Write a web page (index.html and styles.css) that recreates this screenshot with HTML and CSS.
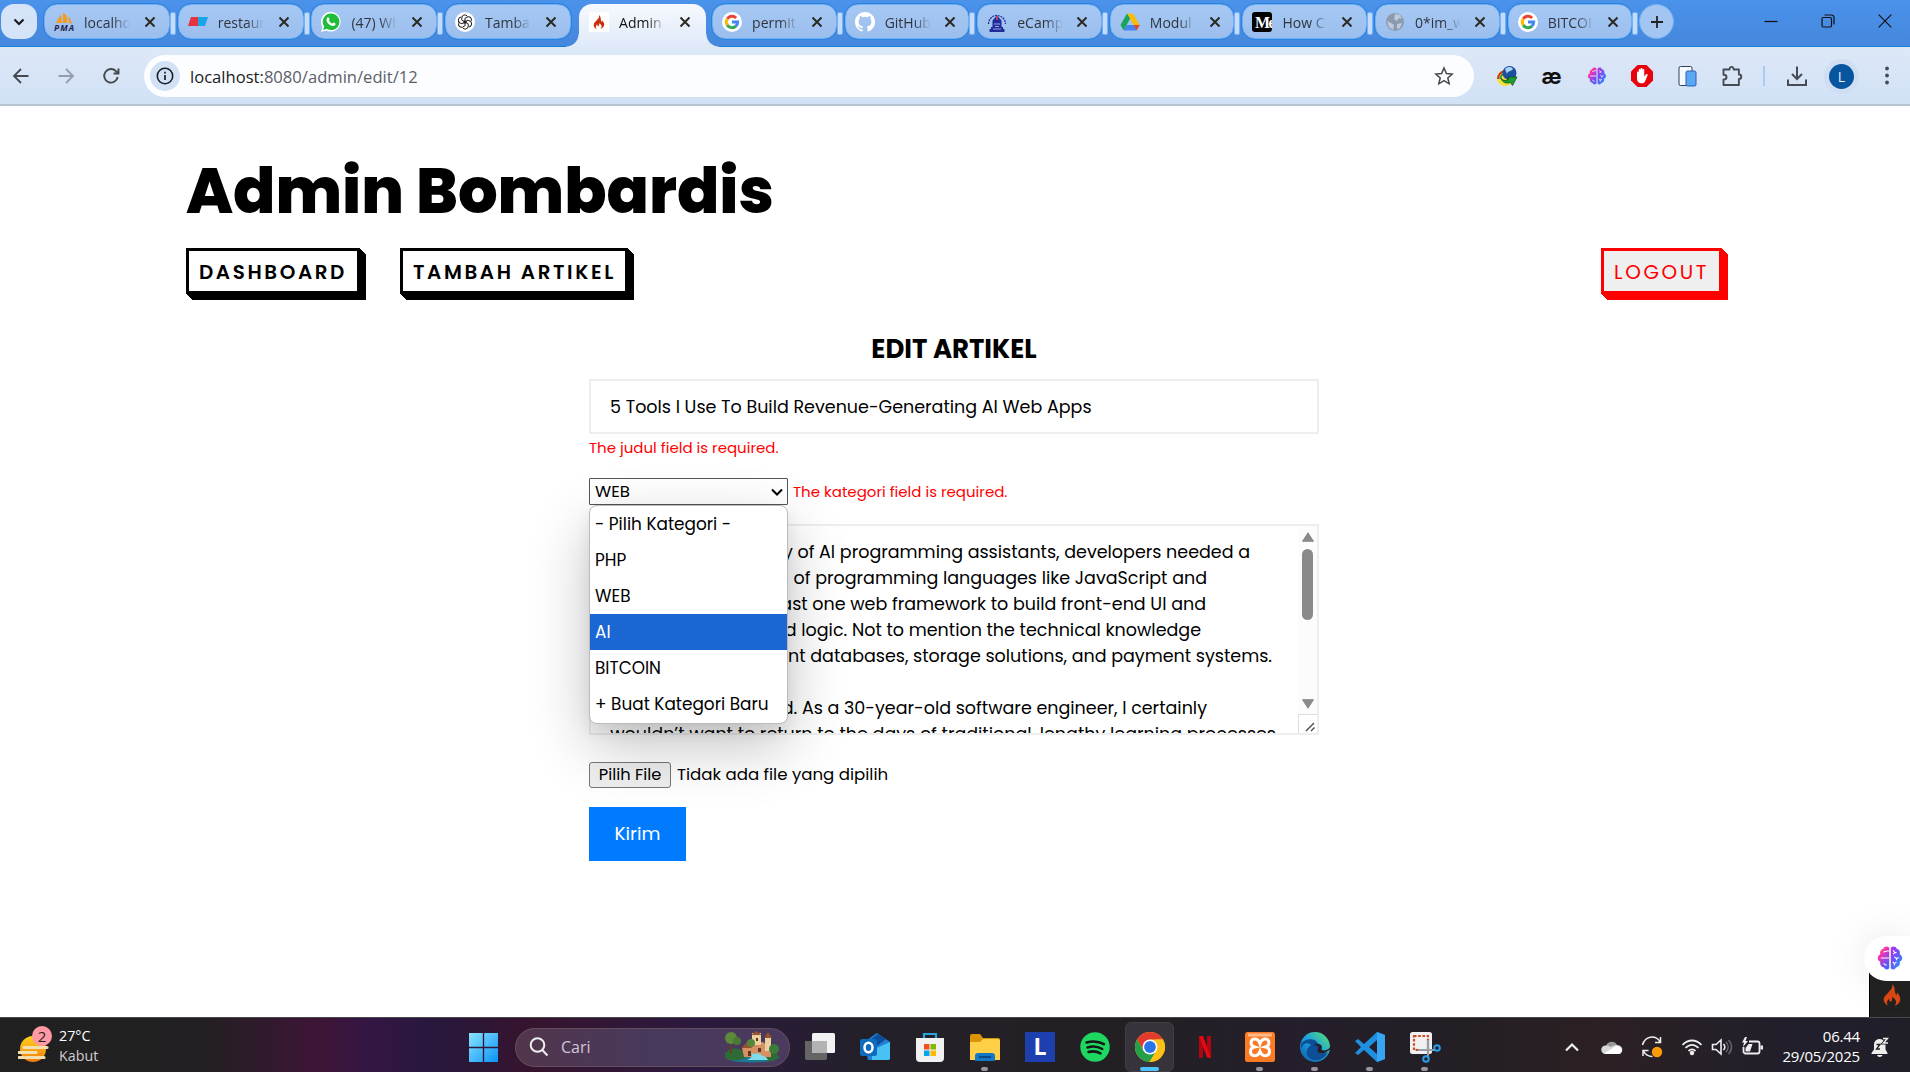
FILE: index.html
```html
<!DOCTYPE html>
<html lang="id">
<head>
<meta charset="utf-8">
<title>Admin Bombardis</title>
<link rel="stylesheet" href="styles.css">
</head>
<body>
<svg class="defs" width="0" height="0">
  <defs>
    <linearGradient id="brainL" x1="0" y1="0" x2="0.6" y2="1"><stop offset="0" stop-color="#ff9a1f"/><stop offset=".4" stop-color="#f22fb5"/><stop offset="1" stop-color="#4b5dff"/></linearGradient>
    <linearGradient id="brainR" x1="0" y1="0" x2="0.8" y2="1"><stop offset="0" stop-color="#c02cf0"/><stop offset=".5" stop-color="#6a55f5"/><stop offset="1" stop-color="#1b9dff"/></linearGradient>
    <linearGradient id="win" x1="0" y1="0" x2="1" y2="1"><stop offset="0" stop-color="#8be3ff"/><stop offset="1" stop-color="#0a93f5"/></linearGradient>
    <linearGradient id="edge" x1="0" y1="1" x2="1" y2="0"><stop offset="0" stop-color="#0c59a4"/><stop offset=".5" stop-color="#1ba0e0"/><stop offset="1" stop-color="#5fe36a"/></linearGradient>
    <linearGradient id="sun" x1="0" y1="0" x2="0" y2="1"><stop offset="0" stop-color="#ffd21f"/><stop offset="1" stop-color="#f27a0c"/></linearGradient>
    <symbol id="google" viewBox="0 0 24 24"><circle cx="12" cy="12" r="12" fill="#fff"/><g fill="none" stroke-width="3.6"><path d="M6.3 8.2A6.8 6.8 0 0 1 16.9 7.3" stroke="#ea4335"/><path d="M6.4 15.9a6.8 6.8 0 0 1-.1-7.7" stroke="#fbbc05"/><path d="M16.7 16.9A6.8 6.8 0 0 1 6.3 15.7" stroke="#34a853"/><path d="M12 12h6.8a6.8 6.8 0 0 1-2.2 5" stroke="#4285f4"/></g></symbol>
    <symbol id="brain" viewBox="0 0 24 24"><path d="M11.3 2.5C9.500.8 6.500 1 5.800 3.500 3.300 4 2.300 6.500 3 8.500 0 10 0 14 3 15.500c-.5 3 1.200 5 3.500 5.200 1.200 2.300 3.800 2.300 4.800.8z" fill="url(#brainL)"/><path d="M12.700 2.500c1.800-1.700 4.800-1.500 5.500 1C20.700 4 21.700 6.500 21 8.500c3 1.500 3 5.500 0 7 .5 3-1.200 5-3.500 5.200-1.200 2.300-3.800 2.300-4.800.8z" fill="url(#brainR)"/><path d="M3.500 12H11M6 6.500c1 0 2-1 3-1h2M6 17c1 0 1 1.500 3 1.500M15 5l1.500 2L15 8.500M16.500 7H18M16 11l2 1.500 2-1M18 12.500V14M14.500 15.500l1.500 1.500 2-1M16 17v2" fill="none" stroke="#fff" stroke-width="1"/></symbol>
    <symbol id="flame" viewBox="0 0 24 24"><path d="M12.200 0c.8 4.600-2 6.600-4.500 9.500C5 12.500 2.600 14.200 3 17.800c.3 2.900 2.500 4.900 5 6-2.300-2.500-1.600-5.800 1-7.800-.2 2 .6 3 1.900 3.300 1.500-1.200 1.800-3.200.8-5.200 2.700 1 4.800 3 4.700 5.700 0 1.700-.8 3-1.900 4 3.600-1 6.500-3.400 6.500-7.500 0-3.300-2.300-5-3-7.300-.7 1.200-.6 2.200-.9 3.200C13.700 8.500 16.500 4 12.200 0z"/></symbol>
    <symbol id="close" viewBox="0 0 12 12"><path d="M1.500 1.500l9 9M10.500 1.500l-9 9" fill="none" stroke="#2b2a22" stroke-width="2"/></symbol>
  </defs>
</svg>

<header class="tabstrip">
  <button class="tab-search"><svg width="12" height="12" viewBox="0 0 12 12"><path d="M1.500 3.500L6 8l4.500-4.500" fill="none" stroke="#1b1b1b" stroke-width="2.200"/></svg></button>
  <div class="tabs before">
    <div class="tab"><svg class="fav" viewBox="0 0 20 20"><path d="M7 2l1 9H2zM9 1c4 1 5 6 4 10H9zM14 4c2 2 3 4 4 8l-3-1z" fill="#f79a1c"/><text x="0" y="18.500" font-size="8.500" font-weight="700" font-style="italic" fill="#23264f" textLength="20">PMA</text></svg><span>localhost</span><svg class="x"><use href="#close"/></svg></div>
    <div class="tab"><svg class="fav" viewBox="0 0 20 20"><path d="M3 5h7v9H0z" fill="#e8313e"/><path d="M10 5h10l-3 9h-7z" fill="#1aa5e8"/></svg><span>restaurant</span><svg class="x"><use href="#close"/></svg></div>
    <div class="tab"><svg class="fav" viewBox="0 0 20 20"><path d="M10 0a9.800 9.800 0 1 1-4.700 18.500L0 20l1.500-5A9.800 9.800 0 0 1 10 0z" fill="#fff"/><path d="M10 1.500a8.300 8.300 0 1 1-4.300 15.300L2 18l1.200-3.500A8.300 8.300 0 0 1 10 1.500z" fill="#1fbd3a"/><path d="M6.500 5.500c1-1 1.700.5 2 1.500.2.800-.7 1.200-.5 1.600.8 1.500 1.800 2.300 3.200 2.900.5.100 1-1.300 1.600-1 1 .4 2 1 1.600 2-.8 2-3.300 1.800-5.500.5-2.300-1.500-4.800-4.500-2.400-7.500z" fill="#fff"/></svg><span>(47) Whats</span><svg class="x"><use href="#close"/></svg></div>
    <div class="tab"><svg class="fav" viewBox="0 0 20 20"><circle cx="10" cy="10" r="10" fill="#fff"/><g fill="none" stroke="#222" stroke-width="1"><path id="petal" d="M6.800 8.200V5.800a3 3 0 0 1 5.600-1.400M6.800 8.200l4.800 2.800"/><use href="#petal" transform="rotate(60 10 10)"/><use href="#petal" transform="rotate(120 10 10)"/><use href="#petal" transform="rotate(180 10 10)"/><use href="#petal" transform="rotate(240 10 10)"/><use href="#petal" transform="rotate(300 10 10)"/></g></svg><span>Tambah</span><svg class="x"><use href="#close"/></svg></div>
  </div>
  <div class="tab active"><svg class="fav" viewBox="0 0 20 20"><rect width="20" height="20" fill="#fff"/><use href="#flame" x="3" y="2.500" width="14" height="15" fill="#c9300b"/></svg><span>Admin</span><svg class="x"><use href="#close"/></svg></div>
  <div class="tabs after">
    <div class="tab"><svg class="fav"><use href="#google"/></svg><span>permit</span><svg class="x"><use href="#close"/></svg></div>
    <div class="tab"><svg class="fav" viewBox="0 0 16 16"><path fill="#fff" d="M8 0C3.580 0 0 3.580 0 8c0 3.540 2.290 6.530 5.470 7.590.4.070.55-.17.55-.38v-1.490c-2.010.37-2.530-.49-2.690-.94-.09-.23-.48-.94-.82-1.130-.28-.15-.68-.52-.01-.53.630-.01 1.080.58 1.230.82.720 1.210 1.870.87 2.330.66.070-.52.280-.87.510-1.070-1.780-.2-3.640-.89-3.640-3.950 0-.87.310-1.590.82-2.150-.08-.2-.36-1.020.08-2.120 0 0 .67-.21 2.200.82a7.700 7.700 0 0 1 4 0c1.530-1.040 2.200-.82 2.200-.82.440 1.100.16 1.920.08 2.120.51.560.82 1.270.82 2.150 0 3.070-1.870 3.750-3.650 3.950.29.250.54.730.54 1.480v2.200c0 .21.150.46.550.38A8 8 0 0 0 8 0z"/></svg><span>GitHub</span><svg class="x"><use href="#close"/></svg></div>
    <div class="tab"><svg class="fav" viewBox="0 0 20 20"><path d="M1.500 12a8.500 8.500 0 1 1 17 0" fill="none" stroke="#26309a" stroke-width="1.300" stroke-dasharray="2 .8"/><path d="M10 3.500l4.500 5v6.500h1.500v2h1.500v3h-15v-3H4v-2h1.500V8.500z" fill="#1f2b9b"/><path d="M7 12h6M6 17h8M8 14.500h4" stroke="#b8c7f2" stroke-width=".8"/><path d="M10 4v4" stroke="#d64b5e" stroke-width="1.500"/></svg><span>eCamp</span><svg class="x"><use href="#close"/></svg></div>
    <div class="tab"><svg class="fav" viewBox="0 0 20 20"><path d="M7 1.500h6l6.700 11.500h-6z" fill="#fbbc04"/><path d="M7 1.500l3.100 5L3.800 18.500.5 13z" fill="#1aa35a"/><path d="M3.800 18.500L6.900 13h12.800l-3.300 5.500z" fill="#4285f4"/><path d="M13.700 13h6l-3.300 5.500z" fill="#ea4335"/></svg><span>Modul</span><svg class="x"><use href="#close"/></svg></div>
    <div class="tab"><svg class="fav" viewBox="0 0 20 20"><rect width="20" height="20" rx="3" fill="#000"/><text x="3" y="15.500" font-family="Liberation Serif" font-size="16" font-weight="700" fill="#fff" letter-spacing="-1.500">Me</text></svg><span>How C</span><svg class="x"><use href="#close"/></svg></div>
    <div class="tab"><svg class="fav" viewBox="0 0 20 20"><circle cx="10" cy="10" r="9" fill="#8d9aae"/><path d="M10 2l5 1 2 4-3-1-2 3-3-2zM2 9l4 2 3 2-1 5-4-3zM12 12l5-1-2 5-3 1z" fill="#bcc9de"/></svg><span>0*im_w</span><svg class="x"><use href="#close"/></svg></div>
    <div class="tab"><svg class="fav"><use href="#google"/></svg><span>BITCOI</span><svg class="x"><use href="#close"/></svg></div>
  </div>
  <button class="newtab"><svg width="14" height="14" viewBox="0 0 14 14"><path d="M7 1v12M1 7h12" stroke="#222" stroke-width="1.800"/></svg></button>
  <div class="winctl">
    <svg viewBox="0 0 14 14"><path d="M.5 7.500h13" stroke="#111" stroke-width="1.200"/></svg>
    <svg viewBox="0 0 14 14" fill="none" stroke="#111" stroke-width="1.200"><rect x="1" y="3.500" width="9.500" height="9.500" rx="1.500"/><path d="M3.500 1h7a2.500 2.500 0 0 1 2.500 2.500v7"/></svg>
    <svg viewBox="0 0 14 14"><path d="M.7.7l12.600 12.600M13.300.7L.7 13.300" stroke="#111" stroke-width="1.200"/></svg>
  </div>
</header>

<nav class="toolbar">
  <svg class="ic" viewBox="0 0 20 20" fill="none" stroke="#45494f" stroke-width="1.800"><path d="M17.500 10H3M10 3l-7 7 7 7"/></svg>
  <svg class="ic" viewBox="0 0 20 20" fill="none" stroke="#949eab" stroke-width="1.800"><path d="M2.500 10H17M10 3l7 7-7 7"/></svg>
  <svg class="ic" viewBox="0 0 20 20" fill="none" stroke="#45494f" stroke-width="1.900"><path d="M16.700 11A6.800 6.800 0 1 1 15 5.200l2 2M17.500 2.500v5h-5"/></svg>
  <div class="omnibox">
    <span class="info"><svg width="18" height="18" viewBox="0 0 18 18"><circle cx="9" cy="9" r="7.700" fill="none" stroke="#1b1f27" stroke-width="1.600"/><path d="M9 8v5M9 4.800v1.800" stroke="#1b1f27" stroke-width="1.700"/></svg></span>
    <span class="url"><b>localhost:</b>8080/admin/edit/12</span>
    <svg class="ic" viewBox="0 0 20 20"><path d="M10 2l2.400 5.500 5.900.5-4.500 3.900 1.400 5.900L10 14.700l-5.200 3.100 1.400-5.900L1.700 8l5.900-.5z" fill="none" stroke="#474747" stroke-width="1.500"/></svg>
  </div>
  <div class="exts">
    <div><svg viewBox="0 0 22 22"><circle cx="9" cy="13" r="8" fill="#f6e037"/><path d="M2 14a8 8 0 0 1 7-8" stroke="#cf3030" stroke-width="2" fill="none"/><path d="M4.500 14a6 6 0 0 1 5-6" stroke="#2c9b3c" stroke-width="2" fill="none"/><circle cx="13.500" cy="8" r="7" fill="#1e4f9d"/><path d="M9 4c3-3 7-2 8 0-2 3-5 1-6 5z" fill="#a7d4f5"/><path d="M5 13.500c3 2.500 5 2.500 8 .5l-1-2h9l-4.500 8.500-2-3c-4 1.500-8 0-9.500-4z" fill="#17a02d" stroke="#0b4216" stroke-width=".7"/></svg></div>
    <div><span class="ae">æ</span></div>
    <div><svg viewBox="0 0 24 24"><use href="#brain" x="1.500" y="1.500" width="21" height="21"/></svg></div>
    <div><svg viewBox="0 0 22 22"><path d="M6.500 0h9L22 6.500v9L15.500 22h-9L0 15.500v-9z" fill="#e8040f"/><path d="M6 11.500V7.500c0-1.300 1.700-1.300 1.700 0V5c0-1.300 1.800-1.300 1.800 0V4c0-1.300 1.900-1.300 1.900 0v1c0-1.300 1.800-1.300 1.800 0v6.500l1.700-2c.8-1 2.200-.2 1.600 1L14 16.500c-.6 1.100-1.600 1.800-3 1.800-3.500 0-5-1.800-5-5z" fill="#fff"/></svg></div>
    <div><svg viewBox="0 0 22 22"><rect x="3" y="1.500" width="13" height="19" rx="1.500" fill="#f5f8ff" stroke="#34405a"/><rect x="10" y="6" width="10" height="15" rx="1.500" fill="#5aa7f6" stroke="#2e5fae"/></svg></div>
    <div><svg viewBox="0 0 22 22"><path d="M2.500 4.500h6c-.2-3.500 4.300-3.500 4.200 0h5.200v5c3.200 0 3.200 4.500 0 4.500v6H2.500v-5.500c4 0 4-4.700 0-4.700z" fill="none" stroke="#474c54" stroke-width="1.900" stroke-linejoin="round"/></svg></div>
    <i class="sep"></i>
    <div><svg viewBox="0 0 22 22"><path d="M11 1.500v12M6 9l5 5 5-5M2 14.500V20h18v-5.500" fill="none" stroke="#474c54" stroke-width="2"/></svg></div>
    <div><span class="avatar">L</span></div>
    <div><svg viewBox="0 0 22 22" fill="#474c54"><circle cx="11" cy="3.500" r="1.900"/><circle cx="11" cy="10.500" r="1.900"/><circle cx="11" cy="17.500" r="1.900"/></svg></div>
  </div>
</nav>

<main class="page">
  <h1>Admin Bombardis</h1>
  <div class="menu">
    <a class="btn3d dash">DASHBOARD</a>
    <a class="btn3d add">TAMBAH ARTIKEL</a>
    <a class="btn3d logout">LOGOUT</a>
  </div>
  <form class="form">
    <h2>EDIT ARTIKEL</h2>
    <div class="input">5 Tools I Use To Build Revenue-Generating AI Web Apps</div>
    <p class="error">The judul field is required.</p>
    <div class="catrow">
      <div class="select"><span>WEB</span>
        <svg width="12" height="8" viewBox="0 0 12 8"><path d="M1 1.500l5 5 5-5" fill="none" stroke="#000" stroke-width="2"/></svg>
        <ul class="options">
          <li>- Pilih Kategori -</li>
          <li>PHP</li>
          <li>WEB</li>
          <li class="on">AI</li>
          <li>BITCOIN</li>
          <li>+ Buat Kategori Baru</li>
        </ul>
      </div>
      <p class="error">The kategori field is required.</p>
    </div>
    <div class="textarea">
      <div class="lines">
        <p class="l1">y of AI programming assistants, developers needed a</p>
        <p class="l2">g of programming languages like JavaScript and</p>
        <p class="l3">ast one web framework to build front-end UI and</p>
        <p class="l4">d logic. Not to mention the technical knowledge</p>
        <p class="l5">ent databases, storage solutions, and payment systems.</p>
        <p></p>
        <p class="l7">d. As a 30-year-old software engineer, I certainly</p>
        <p class="l8">wouldn’t want to return to the days of traditional, lengthy learning processes</p>
      </div>
      <div class="scroll">
        <svg width="14" height="10" viewBox="0 0 14 10"><path d="M7 .8L12.500 9.300h-11z" fill="#8a8a8a" stroke="#8a8a8a" stroke-linejoin="round"/></svg>
        <i class="thumb"></i>
        <svg width="14" height="10" viewBox="0 0 14 10"><path d="M7 9.200L12.500.7h-11z" fill="#8a8a8a" stroke="#8a8a8a" stroke-linejoin="round"/></svg>
        <svg class="grip" width="19" height="19" viewBox="0 0 19 19"><path d="M.5 19V.5H19" fill="none" stroke="#ddd"/><path d="M8 17l8-8M13 17l3.500-3.500" stroke="#444" stroke-width="1.300"/></svg>
      </div>
    </div>
    <div class="file"><span class="pick">Pilih File</span><span class="none">Tidak ada file yang dipilih</span></div>
    <div class="submit">Kirim</div>
  </form>
  <div class="ci"><svg width="22" height="26" viewBox="0 0 24 24" fill="#dd4814"><use href="#flame"/></svg></div>
  <div class="brainpill"><svg width="26" height="26"><use href="#brain"/></svg></div>
</main>

<footer class="taskbar">
  <div class="weather">
    <svg width="36" height="40" viewBox="0 0 36 40"><circle cx="15" cy="23" r="13" fill="url(#sun)"/><path d="M6 21.500h23M1 26.500h17M8 31.500h18M1 31.500h5" stroke="#f4dfae" stroke-width="3.200" stroke-linecap="round"/><circle cx="24" cy="10" r="10" fill="#ff99a4"/><text x="24" y="15.500" text-anchor="middle" font-size="15" fill="#222">2</text></svg>
    <div><div class="temp">27°C</div><div class="cond">Kabut</div></div>
  </div>
  <svg class="start" viewBox="0 0 30 30" fill="url(#win)"><path d="M0 0h14.300v14.300H0zM15.700 0H30v14.300H15.700zM0 15.700h14.300V30H0zM15.700 15.700H30V30H15.700z"/></svg>
  <div class="search">
    <svg width="20" height="20" viewBox="0 0 20 20" fill="none" stroke="#eee" stroke-width="2"><circle cx="8.500" cy="8" r="6.800"/><path d="M13.300 13l5.200 5.500"/></svg>
    <span>Cari</span>
    <svg class="scene" width="58" height="32" viewBox="0 0 58 32"><ellipse cx="29" cy="26" rx="27" ry="5.500" fill="#1b7893"/><path d="M2 22c6-6 14-6 20 0l2 4c-6 4-16 4-22 1zM42 24c4-4 10-4 14 1-2 5-10 6-15 4z" fill="#2f6b35"/><path d="M8 8v14" stroke="#6b3b1d" stroke-width="2"/><circle cx="8" cy="7" r="6" fill="#5c8a3a"/><circle cx="14" cy="10" r="4" fill="#4a7a33"/><path d="M19 17l6-6h15l8 6v9H21z" fill="#d69063"/><path d="M29 2h9v12h-9zM42 6h6v14h-6z" fill="#ecd1a0"/><path d="M28 4l5-4 6 4zM41 7l4-6 4 6zM19 17l5-6 5 6z" fill="#96502d"/><path d="M25 20h3v5h-3zM33 7h2v3h-2zM35 17h3v4h-3z" fill="#5c3524"/><circle cx="28" cy="12" r="4" fill="#568637"/><circle cx="51" cy="18" r="5" fill="#3b7c3b"/><path d="M28 22c5 2 6-1 9 1 4 3 7 3 8 6H24c5-2 6-4 4-7z" fill="#7fdbe8"/></svg>
  </div>
  <div class="apps">
    <div><svg viewBox="0 0 30 30"><rect x="7" y="1" width="23" height="20" rx="1.500" fill="#f2f2f2"/><path d="M0 9h22v17a2 2 0 0 1-2 2H2a2 2 0 0 1-2-2z" fill="#6b6b6b" opacity=".93"/><path d="M7 9h15v12H7z" fill="#b3b3b3"/></svg></div>
    <div><svg viewBox="0 0 30 30"><path d="M4 10L17 1l13 9v16a2 2 0 0 1-2 2H8z" fill="#1f7ed8"/><path d="M12 18l18-8v16a2 2 0 0 1-2 2H12z" fill="#48c2f5"/><path d="M9 9l9-7 8 5-13 10z" fill="#0c4e9e"/><rect y="7" width="17" height="17" rx="2" fill="#0f6cbd"/><ellipse cx="8.500" cy="15.500" rx="4" ry="4.800" fill="none" stroke="#fff" stroke-width="2.500"/></svg></div>
    <div><svg viewBox="0 0 30 30"><path d="M9 8V2h12v6" fill="none" stroke="#29a4df" stroke-width="2.200"/><path d="M1 6h28v20a4 4 0 0 1-4 4H5a4 4 0 0 1-4-4z" fill="#f1f1f1"/><path fill="#f25022" d="M9 12h5.500v5.500H9z"/><path fill="#7fba00" d="M15.500 12H21v5.500h-5.500z"/><path fill="#00a4ef" d="M9 18.500h5.500V24H9z"/><path fill="#ffb900" d="M15.500 18.500H21V24h-5.500z"/></svg></div>
    <div class="run"><svg viewBox="0 0 30 30"><path d="M0 4a2 2 0 0 1 2-2h8l3 4h15a2 2 0 0 1 2 2v7H0z" fill="#d99407"/><path d="M0 10h10l3-3h15a2 2 0 0 1 2 2v19H0z" fill="#ffcf48"/><path d="M5 29v-5a3 3 0 0 1 3-3h14a3 3 0 0 1 3 3v5z" fill="#1279c7"/><path d="M9 25h12" stroke="#0a4a86" stroke-width="2"/></svg></div>
    <div><svg viewBox="0 0 30 30"><rect width="30" height="30" fill="#1e3fae"/><text x="15" y="23" text-anchor="middle" font-size="23" font-weight="700" fill="#fff">L</text></svg></div>
    <div><svg viewBox="0 0 30 30"><circle cx="15" cy="15" r="14.700" fill="#1ed760"/><path d="M6.500 10.500c6-1.800 12.500-1.200 17.500 1.700M7.500 15.500c5-1.500 10.500-.9 14.800 1.500M8.500 20c4.200-1.100 8.400-.7 12 1.300" fill="none" stroke="#161616" stroke-width="2.500" stroke-linecap="round"/></svg></div>
    <div class="run current"><svg viewBox="0 0 30 30"><circle cx="15" cy="15" r="15" fill="#fbc116"/><path d="M2 7.500A15 15 0 0 1 28 7.500H15l-6.500 11z" fill="#e33b2e"/><path d="M2 7.500A15 15 0 0 0 14.500 30l7-11.500h-13z" fill="#24a148"/><path d="M28 7.500A15 15 0 0 1 14.500 30l7-11.500L20 9V7.500z" fill="#fbc116"/><circle cx="15" cy="15" r="7.500" fill="#fff"/><circle cx="15" cy="15" r="5.900" fill="#2a74ea"/></svg></div>
    <div><svg viewBox="0 0 30 30"><path d="M9 4h4v21.500l-4 .7zM17 4h4v22l-4-.7z" fill="#b1060f"/><path d="M9 4h4l8 22-4-.7z" fill="#e50914"/></svg></div>
    <div class="run"><svg viewBox="0 0 30 30"><rect width="30" height="30" rx="2.500" fill="#fb7a24"/><path d="M3 1.500h24v3H3z" fill="#fdb98a"/><path d="M15 11.500C13 5 6 6 6 10.500c0 3 2 4 3.500 4.500C7 15.500 5.500 17 5.500 19.500c0 5 7.500 6 9.500 0 2 6 9.500 5 9.500 0 0-2.500-1.500-4-4-4.500 1.500-.5 3.500-1.500 3.500-4.500C24 6 17 5 15 11.500z" fill="none" stroke="#fff" stroke-width="3"/></svg></div>
    <div class="run"><svg viewBox="0 0 30 30"><circle cx="15" cy="15" r="15" fill="url(#edge)"/><path d="M1 12C5 6 17 5 19 14c.5 3-2 3.500-1 5.500 2 3 7 2.500 10 .5-3 7-10 9.500-16 7.500C5 25 5 17 11 13 7 10 3 11 1 17z" fill="#0d4f97"/><path d="M13 14c3-2 6 0 5 2.500-2 3 1 5.500 6 5l6-4V15c-1 3-6 4-8 3-1-.5 0-1.500 0-3-.5-3-5-5-9-1z" fill="#241f28"/></svg></div>
    <div class="run"><svg viewBox="0 0 30 30"><path d="M22 0l8 3v24l-8 3L9 18l-6 5-3-2 6-6-6-6 3-2 6 5zM22 8l-8 7 8 7z" fill="#1f8fe0"/><path d="M22 0l8 3v24l-8 3z" fill="#37a5f2"/></svg></div>
    <div class="run"><svg viewBox="0 0 30 30"><rect x="0" y="0" width="22" height="22" rx="2.500" fill="#f1f1f3"/><rect x="4" y="4" width="14" height="14" fill="none" stroke="#d24a1c" stroke-width="2.200" stroke-dasharray="2.600 1.600"/><path d="M18 8v18M8 18h18" stroke="#9a9da5" stroke-width="2.200"/><circle cx="27" cy="16" r="2.800" fill="none" stroke="#299cea" stroke-width="2"/><circle cx="16" cy="27" r="2.800" fill="none" stroke="#299cea" stroke-width="2"/></svg></div>
  </div>
  <div class="tray">
    <svg class="t-chev" viewBox="0 0 16 20"><path d="M2 13.500l6-6 6 6" fill="none" stroke="#eee" stroke-width="2.200"/></svg>
    <svg class="t-ic" viewBox="0 0 22 20"><path d="M5 9a6 6 0 0 1 11-1l-8 6z" fill="#999"/><path d="M4.500 17a4 4 0 0 1 0-8.500c2-.3 4 .5 5.500 1.500 3-2 6-2.500 8-1.500 4 .8 5 7-.5 8.500z" fill="#d8d8d8"/><path d="M3 16.500L15 9c6 0 8 6.500 3 8H5z" fill="#fff"/></svg>
    <svg class="t-ic" viewBox="0 0 22 22"><path d="M1.500 9C4 0 14-1.500 19 5.500M19.500 1v5.500H14M2 20v-5.500h5.500M2.500 15c2 4 5 5.500 9 5.500" fill="none" stroke="#eee" stroke-width="1.500"/><circle cx="16" cy="16" r="5.200" fill="#fc9a0a"/></svg>
    <svg class="t-ic" viewBox="0 0 22 20"><g fill="none" stroke="#eee" stroke-width="1.800"><path d="M1.500 8c5.500-6 13.500-6 19 0M4.500 11c4-4.300 9-4.300 13 0M7.500 14c2.300-2.300 4.700-2.300 7 0"/></g><circle cx="11" cy="16" r="2.200" fill="#eee"/></svg>
    <svg class="t-ic" viewBox="0 0 22 20"><path d="M1.500 7.500H5l5-4.500v14l-5-4.500H1.500z" fill="none" stroke="#eee" stroke-width="1.600"/><path d="M12.500 7c1.500 1.700 1.500 4.300 0 6" fill="none" stroke="#eee" stroke-width="1.500"/><path d="M15 5c2.800 3 2.800 7 0 10M17.500 3c4 4 4 10 0 14" fill="none" stroke="#66636b" stroke-width="1.500"/></svg>
    <svg class="t-ic" viewBox="0 0 22 20"><path d="M8 4.500h8.500a2 2 0 0 1 2 2v8a2 2 0 0 1-2 2h-12a2 2 0 0 1-2-2V10" fill="none" stroke="#eee" stroke-width="1.800"/><path d="M19.500 8.500H22v4h-2.500zM4.500 14.500V11l3-4h4L9 14.500zM4 0L1 5.500h2L2 10l5-6H4.500L6 0z" fill="#eee"/></svg>
    <div class="clock"><div>06.44</div><div>29/05/2025</div></div>
    <svg class="t-bell" viewBox="0 0 18 20"><path d="M9 2c-4 0-6 2.500-6 6v4.500L.5 16v1h16v-1L14.500 12.500V8C14 5 12 2 9 2zM6 18h5.500c-.5 2.500-5 2.500-5.500 0z" fill="#eee"/><path d="M5.500 7.500H9L5.500 12H9" fill="none" stroke="#222" stroke-width="1.300"/><path d="M12 1.500h4.500L12.500 6H17" fill="none" stroke="#222" stroke-width="3"/><path d="M12 1.500h4.500L12.500 6H17" fill="none" stroke="#eee" stroke-width="1.400"/></svg>
  </div>
</footer>
</body>
</html>
```
FILE: styles.css
```css
* { box-sizing: border-box; margin: 0; padding: 0; }
body {
  width: 1910px;
  height: 1072px;
  overflow: hidden;
  background: #fff;
  color: #000;
  display: flex;
  flex-direction: column;
  font-family: "Open Sans", "Noto Sans", sans-serif;
}
button { border: 0; font: inherit; }
svg { display: block; flex: none; }
.defs { position: absolute; }

/* Tab strip */
.tabstrip {
  flex: none;
  height: 47px;
  display: flex;
  align-items: flex-start;
  padding: 4px 18px 0 1px;
  background: linear-gradient(#4b92eb, #4587dc);
  border-bottom: 1px solid #1a7ddc;
}
.tab-search {
  width: 36px;
  height: 35px;
  border-radius: 13px;
  background: #d5e3f8;
  display: grid;
  place-items: center;
  margin-right: 7px;
}
.tabs { display: flex; }
.before { margin-right: 7px; }
.tab {
  position: relative;
  width: 126px;
  height: 35px;
  margin-right: 7.700px;
  display: flex;
  align-items: center;
  padding-left: 9px;
  border: 1px solid #6db0f5;
  outline: 1px solid #2a83df;
  border-radius: 13px;
  background: linear-gradient(#a6c8f3, #9bbeee);
  font-size: 14px;
  color: #30353d;
}
.after .tab { width: 124.600px; margin-right: 8px; }
.after .tab:last-child, .before .tab:last-child { margin-right: 7px; }
.after .tab::after, .before .tab:not(:last-child)::after {
  content: "";
  position: absolute;
  right: -7px;
  top: 7px;
  width: 4px;
  height: 21px;
  border-radius: 2px;
  background: #c4dcfa;
  border: 1px solid #73b1f6;
}
.fav { width: 20px; height: 20px; }
.tab span {
  width: 46px;
  margin-left: 10px;
  padding-top: 1px;
  overflow: hidden;
  white-space: nowrap;
  -webkit-mask-image: linear-gradient(90deg, #000 62%, transparent);
  mask-image: linear-gradient(90deg, #000 62%, transparent);
}
.x { width: 12px; height: 12px; margin-left: 14px; }
.after .x { margin-left: 13px; }
.tab.active {
  width: 127px;
  height: 43px;
  margin: 0 6px 0 -6px;
  border: 0;
  outline: 0;
  border-radius: 13px 13px 0 0;
  background: linear-gradient(#f6f9fe, #dfe9f8);
  padding: 0 0 7px 10px;
  color: #111;
}
.tab.active::before, .tab.active::after {
  content: "";
  position: absolute;
  bottom: 0;
  width: 13px;
  height: 13px;
}
.tab.active::before { left: -13px; background: radial-gradient(circle at 0 0, transparent 12px, #dfe9f8 13px); }
.tab.active::after { right: -13px; background: radial-gradient(circle at 100% 0, transparent 12px, #dfe9f8 13px); }
.newtab {
  width: 35px;
  height: 35px;
  border-radius: 50%;
  background: #a3c5f2;
  border: 1px solid #6db0f5;
  display: grid;
  place-items: center;
}
.winctl { margin-left: auto; display: flex; gap: 43px; padding-top: 10px; }
.winctl svg { width: 14px; height: 14px; }

/* Address toolbar */
.toolbar {
  flex: none;
  height: 59px;
  display: flex;
  align-items: center;
  gap: 25px;
  padding: 1px 0 0 11px;
  background: linear-gradient(#dde8f7, #d1e1f6);
  border-bottom: 2px solid #b8c4d1;
}
.ic { width: 20px; height: 20px; }
.omnibox {
  width: 1330px;
  height: 42px;
  margin-left: -2px;
  border-radius: 21px;
  background: #fcfdff;
  display: flex;
  align-items: center;
  padding: 0 20px 0 6px;
}
.info {
  width: 30px;
  height: 30px;
  border-radius: 50%;
  background: #d3e1f7;
  display: grid;
  place-items: center;
  margin-right: 10px;
}
.url { font-size: 16.600px; color: #5b6068; margin-right: auto; }
.url b { font-weight: 400; color: #1b1b1b; }
.exts { display: flex; align-items: center; margin-left: -15px; }
.exts div { width: 45px; display: grid; place-items: center; }
.exts svg { width: 22px; height: 22px; }
.ae { font: 700 22px/22px Inter, sans-serif; color: #111; }
.sep { width: 2px; height: 20px; margin: 0 9px; background: #a9cbf5; }
.avatar {
  width: 25px;
  height: 25px;
  border-radius: 50%;
  background: #07559f;
  box-shadow: 0 0 0 5px #d0def4;
  color: #e8f1fb;
  font-size: 14px;
  line-height: 25px;
  text-align: center;
}

/* Admin page */
.page {
  position: relative;
  flex: 1;
  padding: 40px 188px 0 186px;
  font-family: Poppins, Inter, sans-serif;
  white-space: nowrap;
}
h1 { font-size: 62.400px; line-height: 90px; font-weight: 800; }
.menu { display: flex; margin-top: 12px; }
.btn3d {
  height: 46px;
  border: 3px solid;
  line-height: 42px;
  padding-left: 10px;
  font-size: 19.900px;
  font-weight: 600;
  letter-spacing: 2.600px;
  box-shadow: 1px 1px, 2px 2px, 3px 3px, 4px 4px, 5px 5px, 6px 6px;
}
.dash { width: 174px; margin-right: 40px; }
.add { width: 228px; }
.logout { width: 121px; margin-left: auto; color: #f00; background: #efefef; font-weight: 400; }
.form { width: 730px; margin: 35px 0 0 403px; font-size: 17.500px; }
h2 { font-size: 26px; line-height: 40px; font-weight: 700; text-align: center; }
.input {
  height: 55px;
  margin-top: 10px;
  border: 2px solid #eee;
  line-height: 52px;
  padding-left: 19px;
}
.error { font-size: 15px; line-height: 28px; color: #f00; }
.catrow { display: flex; margin-top: 16px; height: 27px; }
.catrow .error { margin-left: 5px; }
.select {
  position: relative;
  width: 199px;
  height: 27px;
  border: 1px solid #555;
  border-radius: 1px;
  display: flex;
  align-items: center;
  justify-content: space-between;
  padding: 0 4px 0 5px;
  background: #fff;
  font-size: 16.600px;
}
.options {
  position: absolute;
  z-index: 2;
  left: -1px;
  top: 26px;
  width: 199px;
  height: 219px;
  border: 1px solid #bbb;
  border-radius: 8px;
  background: #fff;
  list-style: none;
  box-shadow: 0 22px 60px rgba(0, 0, 0, .24), 0 8px 16px rgba(0, 0, 0, .07);
  font-size: 16.900px;
}
.options li { height: 36px; line-height: 37px; padding-left: 5px; }
.on { background: #1a66d2; color: #fff; }
.textarea {
  display: flex;
  justify-content: space-between;
  height: 211px;
  margin-top: 19px;
  border: 2px solid #eee;
  overflow: hidden;
}
.lines { padding: 13px 0 0 19px; line-height: 26px; width: 706px; }
.lines p { height: 26px; display: flex; justify-content: flex-end; }
.l1 { width: 640px; }
.l2 { width: 597px; }
.l3 { width: 596px; }
.l4 { width: 591px; }
.l5 { width: 662px; }
.l7 { width: 597px; }
.l8 { width: 666px; }
.scroll { width: 19px; display: flex; flex-direction: column; align-items: center; background: #fcfcfc; padding-top: 6px; }
.thumb { width: 11px; height: 71px; border-radius: 6px; background: #8a8a8a; margin: 7px 0 79px; }
.grip { margin-top: auto; background: #fff; }
.file { display: flex; margin-top: 27px; height: 26px; line-height: 26px; font-size: 16.600px; }
.pick { width: 82px; border: 1px solid #767676; border-radius: 3px; background: #efefef; line-height: 23px; text-align: center; margin-right: 6px; font-size: 16.300px; }
.submit { width: 97px; height: 54px; margin-top: 19px; background: #007bff; color: #fff; line-height: 54px; text-align: center; font-size: 18.400px; }
.ci {
  position: absolute;
  right: 0;
  bottom: 0;
  width: 41px;
  height: 46px;
  padding: 11px 0 0 11px;
  background: #222;
  border-left: 1px solid #000;
}
.brainpill {
  position: absolute;
  right: 0;
  bottom: 36px;
  width: 46px;
  height: 45px;
  border-radius: 23px 0 0 23px;
  padding: 9px 0 0 13px;
  background: #fff;
  box-shadow: 0 0 40px rgba(0, 0, 0, .1);
}

/* Taskbar */
.taskbar {
  position: relative;
  z-index: 3;
  flex: none;
  height: 55px;
  display: flex;
  align-items: center;
  padding: 4px 21px 0 18px;
  border-top: 1px solid #4a474c;
  background: linear-gradient(90deg, #212121 0, #222022 200px, #3d1536 320px, #341643 365px, #27183c 440px, #37142e 530px, #2b1a3f 700px, #24202a 860px, #222023 1120px, #251e2b 1300px, #231f25 1450px, #2b2024 1600px, #211f2b 1800px, #201f28 100%);
  color: #fff;
}
.weather { display: flex; width: 451px; font-size: 14.300px; line-height: 20px; gap: 5px; margin-top: -2px; }
.cond { color: #cfcbd0; }
.start { width: 29px; height: 29px; }
.search {
  width: 275px;
  height: 39px;
  margin-left: 17px;
  border-radius: 20px;
  border: 1px solid #64505f;
  background: linear-gradient(90deg, #52354c, #47395c 50%, #4a3a5e);
  display: flex;
  align-items: center;
  padding: 0 8px 0 13px;
  color: #cfc8d2;
  font-size: 16px;
}
.search span { margin: 0 auto 0 12px; }
.apps { display: flex; align-self: stretch; margin-left: 2px; }
.apps div { position: relative; width: 55px; display: grid; place-items: center; }
.apps svg { width: 30px; height: 30px; overflow: visible; }
.apps .current::before { content: ""; position: absolute; inset: 0 3px 0; background: #36333b; border: 1px solid #413e45; border-radius: 6px; }
.apps .current svg { position: relative; }
.run::after { content: ""; position: absolute; bottom: 1px; left: 24px; width: 7px; height: 4px; border-radius: 2px; background: #9a959c; }
.run.current::after { left: 18px; width: 19px; background: #4cc2ff; }
.tray { display: flex; align-items: center; margin-left: auto; }
.tray svg { height: 22px; margin-right: 18px; }
.tray .t-chev { width: 16px; margin-right: 21px; }
.t-ic { width: 22px; }
.tray svg:nth-of-type(4) { margin-right: 8px; }
.tray svg:nth-of-type(5) { margin-right: 8px; }
.tray .t-bell { width: 18px; margin: 0 0 0 11px; }
.clock { width: 79px; text-align: right; font-size: 15px; line-height: 20px; letter-spacing: -0.200px; margin-top: -2px; }
```
